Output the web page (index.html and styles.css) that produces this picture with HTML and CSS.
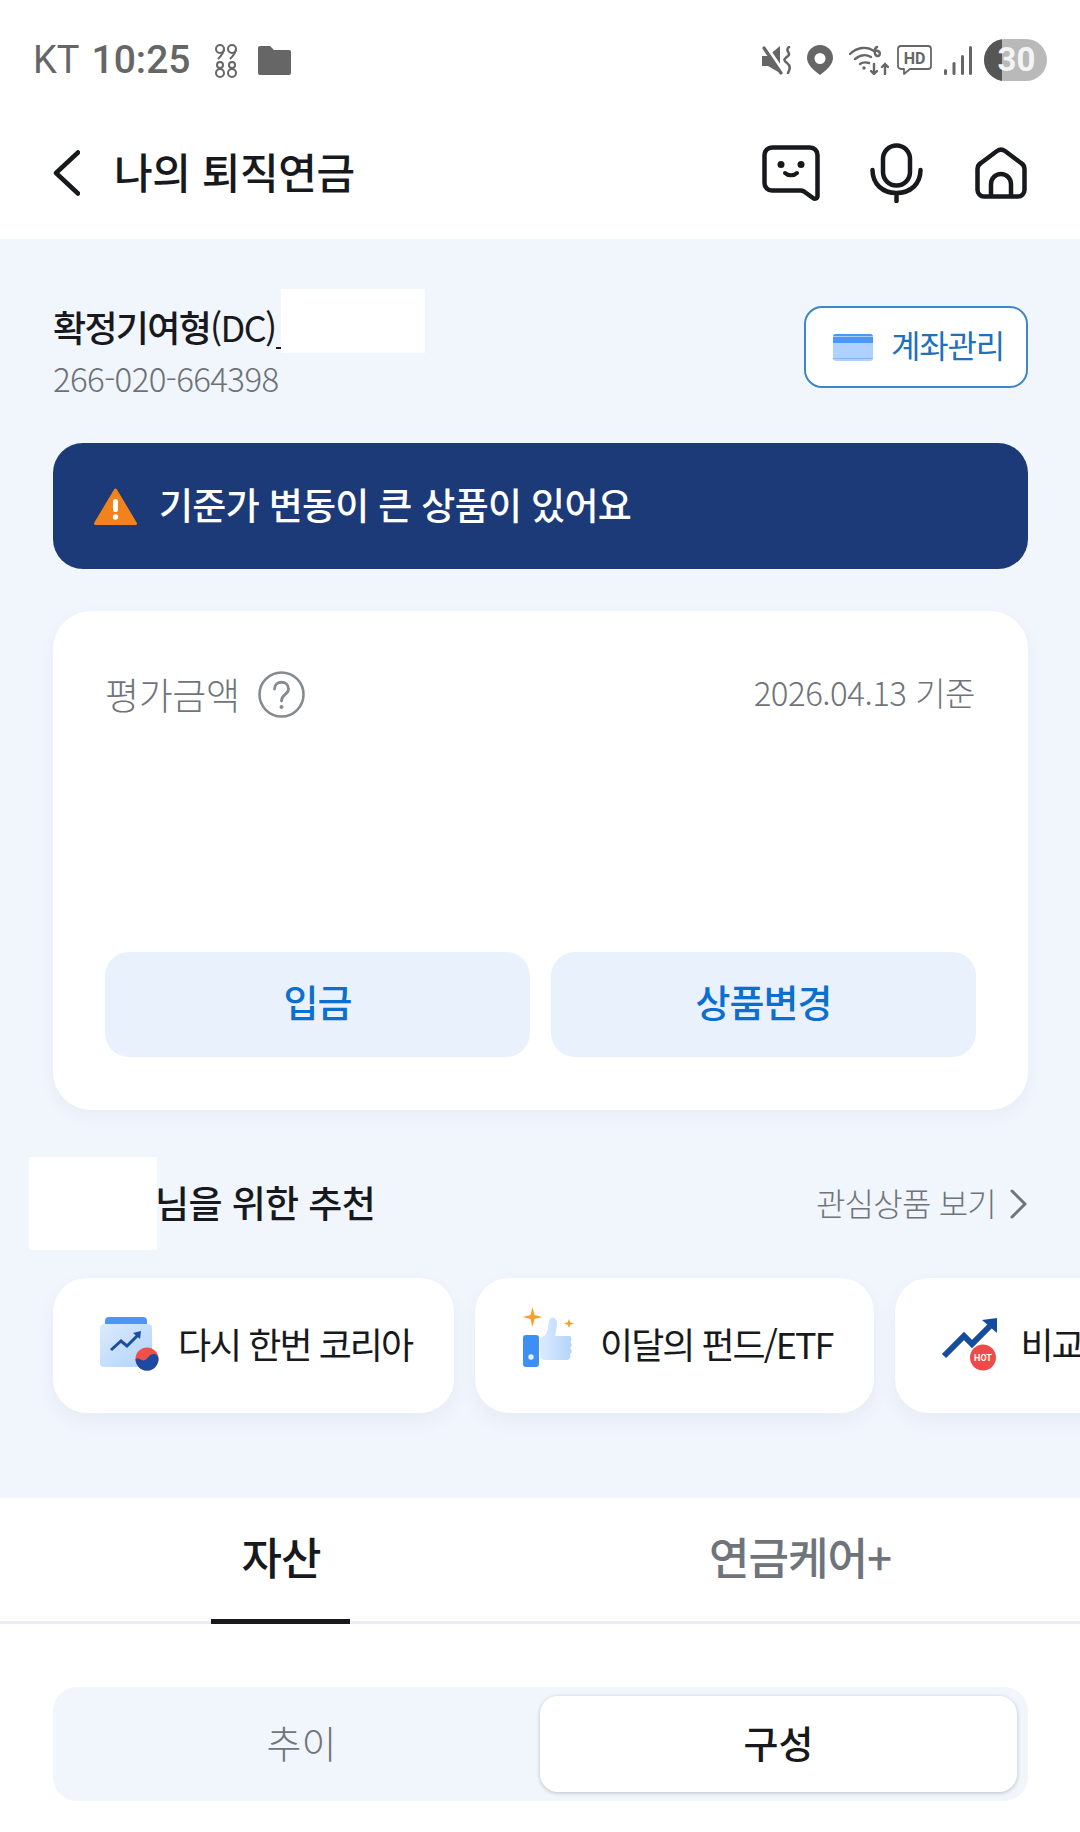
FILE: index.html
```html
<!DOCTYPE html>
<html lang="ko">
<head>
<meta charset="utf-8">
<title>나의 퇴직연금</title>
<link rel="stylesheet" href="styles.css">
</head>
<body>
<div class="page">
  <div class="status">
    <div class="status-left">
      <span class="carrier">KT</span>
      <span class="clock">10:25</span>
      <svg class="ic-nums" viewBox="0 0 24 35" fill="none" stroke="#666" stroke-width="2"><circle cx="6" cy="6" r="4"/><path d="M10 6c0 4-3 7-6 10"/><circle cx="18" cy="6" r="4"/><path d="M22 6c0 4-3 7-6 10"/><circle cx="6" cy="22" r="3"/><circle cx="6" cy="30" r="4"/><circle cx="18" cy="22" r="3"/><circle cx="18" cy="30" r="4"/></svg>
      <svg class="ic-folder" viewBox="0 0 33 29" fill="#666"><path d="M0 2a2 2 0 0 1 2-2h10l4 4h15a2 2 0 0 1 2 2v21a2 2 0 0 1-2 2H2a2 2 0 0 1-2-2z"/></svg>
    </div>
    <div class="status-right">
      <svg class="ic-mute" viewBox="0 0 30 29"><path fill="#666" d="M0 10h6L18 0v27L6 20H0z"/><path stroke="#fff" stroke-width="3.500" d="M4 0l18 27"/><path stroke="#666" stroke-width="3.200" stroke-linecap="round" d="M2 2l17 25"/><path fill="none" stroke="#666" stroke-width="2.600" stroke-linecap="round" d="M27 1c-5 4 3 6-1 9s-5 4-1 7 3 6 1 10"/></svg>
      <svg class="ic-pin" viewBox="0 0 26 30"><path fill="#666" fill-rule="evenodd" d="M13 0a13 13 0 0 1 13 13c0 6-6 12-13 17C6 25 0 19 0 13A13 13 0 0 1 13 0zm0 8a5.500 5.500 0 1 0 0 11 5.500 5.500 0 0 0 0-11z"/></svg>
      <svg class="ic-wifi" viewBox="0 0 40 30" fill="none" stroke="#666" stroke-width="2.400" stroke-linecap="round"><path d="M1 9c7-7 17-8 24-3M6 14c5-4 11-5 16-2M11 19c3-2 6-2 9-1"/><circle cx="15" cy="23" r="1.700" fill="#666" stroke="none"/><path d="M28 2c-3 1-3 8 0 9s4-4 1-5-3 1-3 1M25 19v10M22 26l3 3 3-3M36 29V19M33 22l3-3 3 3"/></svg>
      <svg class="ic-hd" viewBox="0 0 35 30"><path fill="none" stroke="#666" stroke-width="1.800" stroke-linejoin="round" d="M4 1h27a3 3 0 0 1 3 3v17a3 3 0 0 1-3 3H13l-6 5v-5H4a3 3 0 0 1-3-3V4a3 3 0 0 1 3-3z"/><text class="hd-text" x="17.500" y="19" text-anchor="middle">HD</text></svg>
      <svg class="ic-signal" viewBox="0 0 28 29" fill="#666"><rect x="0" y="23" width="3" height="6" rx="1.500"/><rect x="8.500" y="16" width="3" height="13" rx="1.500"/><rect x="17" y="9" width="3" height="20" rx="1.500"/><rect x="25" y="0" width="3" height="29" rx="1.500"/></svg>
      <div class="battery"><span class="battery-level"></span><span class="battery-text">30</span></div>
    </div>
  </div>

  <header class="header">
    <svg class="ic-back" viewBox="0 0 27 46" fill="none" stroke="#17191c" stroke-width="4.500" stroke-linecap="round" stroke-linejoin="round"><path d="M25 2.500L3 23l22 20.500"/></svg>
    <h1 class="title">나의 퇴직연금</h1>
    <div class="header-icons">
      <svg class="ic-chat" viewBox="0 0 58 56" fill="none" stroke="#17191c" stroke-width="4.500" stroke-linejoin="round" stroke-linecap="round"><path d="M10 2.500h38a7.500 7.500 0 0 1 7.500 7.500v41c0 2.500-2.500 3.500-4.500 2l-9-6.500a7 7 0 0 0-4-1H10A7.500 7.500 0 0 1 2.500 38V10A7.500 7.500 0 0 1 10 2.500z"/><circle cx="19" cy="19.500" r="3.500" fill="#17191c" stroke="none"/><circle cx="39" cy="19.500" r="3.500" fill="#17191c" stroke="none"/><path d="M23 28c3 3 9 3 12 0" stroke-width="4"/></svg>
      <svg class="ic-mic" viewBox="0 0 53 60" fill="none" stroke="#17191c" stroke-width="4.500" stroke-linecap="round"><rect x="13" y="2.500" width="27" height="40" rx="13.500"/><path d="M2.500 27c0 14 10 23 24 23s24-9 24-23M26.500 50v8"/></svg>
      <svg class="ic-home" viewBox="0 0 52 52" fill="none" stroke="#17191c" stroke-width="4.500" stroke-linejoin="round"><path d="M22 4a7 7 0 0 1 8 0l16 12a7 7 0 0 1 3.500 6v21a6.500 6.500 0 0 1-6.500 6.500H9A6.500 6.500 0 0 1 2.500 43V22A7 7 0 0 1 6 16z"/><path d="M16 49V37a10 10 0 0 1 20 0v12"/></svg>
    </div>
  </header>

  <main class="main">
    <section class="account">
      <div class="account-info">
        <div class="account-name">확정기여형<span class="latin">(DC)</span><span class="redact redact-name"></span></div>
        <div class="account-num">266-020-664398</div>
      </div>
      <button class="manage">
        <svg class="ic-card" viewBox="0 0 40 27"><rect width="40" height="27" rx="3" fill="#aed2fd"/><path d="M0 3a3 3 0 0 1 3-3h34a3 3 0 0 1 3 3v6H0z" fill="#4a97f5"/><path d="M0 2h40v1H0z" fill="#a9cffb"/><path d="M0 25h40v-1H0z" fill="#7fb5f6"/></svg>
        <span class="manage-text">계좌관리</span>
      </button>
    </section>

    <section class="alert">
      <svg class="ic-warn" viewBox="0 0 43 37"><path fill="#f2831c" stroke="#f2831c" stroke-width="3" stroke-linejoin="round" d="M21.500 2L41.500 35.500H1.500z"/><rect x="19" y="11" width="5" height="13" rx="2.500" fill="#fff"/><circle cx="21.500" cy="29" r="2.700" fill="#fff"/></svg>
      <span class="alert-text">기준가 변동이 큰 상품이 있어요</span>
    </section>

    <section class="card">
      <div class="card-top">
        <div class="eval">
          <span>평가금액</span>
          <svg class="ic-help" viewBox="0 0 47 47" fill="none"><circle cx="23.500" cy="23.500" r="22" stroke="#868b90" stroke-width="2.600"/><path d="M16.500 18c0-9 14-9 14 0 0 6-7 5-7 12" stroke="#868b90" stroke-width="2.800" stroke-linecap="round"/><circle cx="23.500" cy="36" r="2" fill="#868b90"/></svg>
        </div>
        <div class="date">2026.04.13 기준</div>
      </div>
      <div class="card-actions">
        <button class="action">입금</button>
        <button class="action">상품변경</button>
      </div>
    </section>

    <section class="rec-head">
      <div class="rec-title"><span class="redact redact-user"></span>님을 위한 추천</div>
      <div class="rec-link">
        <span class="rec-link-text">관심상품 보기</span>
        <svg class="ic-next" viewBox="0 0 19 30" fill="none" stroke="#6f747a" stroke-width="3" stroke-linecap="round" stroke-linejoin="round"><path d="M3 2l13 13L3 28"/></svg>
      </div>
    </section>

    <section class="pills">
      <div class="pill">
        <svg class="pill-icon" viewBox="0 3 58 60">
          <defs><linearGradient id="g1" x1="0" y1="0" x2="1" y2="1"><stop offset="0" stop-color="#dcebfd"/><stop offset="1" stop-color="#afd2fb"/></linearGradient></defs>
          <path d="M5 14V8a4 4 0 0 1 4-4h34a4 4 0 0 1 4 4v6z" fill="#4a97f5"/>
          <rect x="0" y="11" width="52" height="43" rx="4" fill="url(#g1)"/>
          <path d="M11 37l10-9 6 5 12-12" fill="none" stroke="#1b4f9c" stroke-width="3"/>
          <path d="M33 20l8-2-1 8z" fill="#1b4f9c"/>
          <circle cx="47" cy="46" r="11.500" fill="#f0504a"/>
          <path d="M35.500 46a11.500 11.500 0 0 0 23 0c0-3-2.500-5-5-5s-4.500 2-6 4-4 3-6 2-3-2-6-1z" fill="#1c4aa0"/>
        </svg>
        <span class="pill-text">다시 한번 코리아</span>
      </div>
      <div class="pill">
        <svg class="pill-icon" viewBox="0 9 58 60">
          <defs><linearGradient id="g2" x1="0" y1="0" x2="1" y2="0"><stop offset="0" stop-color="#dcebfd"/><stop offset="1" stop-color="#b2d4fb"/></linearGradient></defs>
          <path d="M10.500 0l2 8 8 2-8 2-2 8-2-8-8-2 8-2z" fill="#f6a033"/>
          <path d="M47 12l1.200 3.300L52 16.500l-3.800 1.200L47 21l-1.200-3.300-3.800-1.200 3.800-1.200z" fill="#f6a033"/>
          <rect x="1" y="28" width="16" height="32" rx="3" fill="#3d8ff5"/>
          <circle cx="9" cy="50" r="2.700" fill="#e8f2ff"/>
          <path d="M18 31c4-1 7-4 8-10 .5-3 0-8 3-10 3-1 6 1 6 5 0 4-1 8-2 13h14c3 0 3 5 1 6 2 1 2 5 0 6 2 1 2 5 0 6 1 2 0 6-3 6H23c-3 0-5-2-5-4z" fill="url(#g2)"/>
        </svg>
        <span class="pill-text">이달의 펀드/ETF</span>
      </div>
      <div class="pill">
        <svg class="pill-icon" viewBox="0 0 58 60">
          <path d="M2 40l20-20 8 8 20-20" fill="none" stroke="#154c9e" stroke-width="6"/>
          <path d="M40 4l15-2v15z" fill="#154c9e"/>
          <circle cx="41" cy="41.500" r="13" fill="#ef4a4a"/>
          <text class="hot" x="41" y="45" text-anchor="middle">HOT</text>
        </svg>
        <span class="pill-text">비교</span>
      </div>
    </section>
  </main>

  <nav class="tabs">
    <div class="tab tab-on"><span>자산</span></div>
    <div class="tab"><span>연금케어+</span></div>
  </nav>

  <section class="panel">
    <div class="segment">
      <div class="seg">추이</div>
      <div class="seg seg-on">구성</div>
    </div>
  </section>
</div>
</body>
</html>
```
FILE: styles.css
```css
* { box-sizing: border-box; }
html, body { margin: 0; padding: 0; background: #fff; }
body { font-family: "Noto Sans CJK KR", "Noto Sans", sans-serif; color: #17191c; }
.page { width: 1080px; height: 1832px; overflow: hidden; display: flex; flex-direction: column; }

/* status bar */
.status { height: 100px; flex: none; display: flex; justify-content: space-between; align-items: center; padding: 20px 33px 0; color: #666; }
.status-left, .status-right { display: flex; align-items: center; }
.carrier, .clock { font-family: "Roboto", sans-serif; font-size: 38px; line-height: 1; }
.clock { font-size: 39px; font-weight: 500; margin-left: 12px; }
.ic-nums { width: 24px; height: 35px; margin-left: 24px; }
.ic-folder { width: 33px; height: 29px; margin-left: 20px; }
.ic-mute { width: 30px; height: 29px; }
.ic-pin { width: 26px; height: 30px; margin-left: 15px; }
.ic-wifi { width: 40px; height: 30px; margin-left: 16px; }
.ic-hd { width: 35px; height: 30px; margin-left: 8px; }
.hd-text { font: 700 16px "Roboto", sans-serif; fill: #666; }
.ic-signal { width: 28px; height: 29px; margin-left: 12px; }
.battery { position: relative; width: 63px; height: 42px; margin-left: 12px; border-radius: 21px; overflow: hidden; background: #b9b9b9; }
.battery-level { display: block; width: 18px; height: 42px; background: #565656; }
.battery-text { position: absolute; inset: 0 0 0 2px; text-align: center; font: 700 33px/42px "Roboto", sans-serif; color: #f4f4f4; }

/* header */
.header { height: 139px; flex: none; display: flex; align-items: center; padding: 6px 53px 0; }
.ic-back { width: 27px; height: 46px; flex: none; }
.title { margin: 0 0 2px 34px; font-size: 42px; line-height: 1.2; font-weight: 500; letter-spacing: -.4px; }
.header-icons { margin-left: auto; display: flex; align-items: center; }
.ic-chat { width: 58px; height: 56px; }
.ic-mic { width: 53px; height: 60px; margin-left: 50px; }
.ic-home { width: 52px; height: 52px; margin-left: 52px; }

/* main */
.main { height: 1259px; flex: none; background: #f1f5fc; padding: 65px 52px 0 53px; }
.account { display: flex; justify-content: space-between; align-items: flex-start; height: 84px; }
.account-name { position: relative; font-size: 36px; line-height: 44px; font-weight: 500; letter-spacing: -1.7px; }
.latin { font-weight: 400; }
.account-num { margin-top: 10px; font-size: 33px; line-height: 40px; font-weight: 300; letter-spacing: -.6px; color: #6c7177; }
.redact { position: absolute; background: #fff; display: block; }
.redact-name { left: 228px; top: -15px; width: 144px; height: 64px; }
.redact-name::before { content: ""; position: absolute; left: -5px; bottom: 4px; width: 5px; height: 2px; background: #17191c; }
.manage { width: 224px; height: 82px; margin-top: 2px; display: flex; align-items: center; justify-content: flex-start; padding: 0 0 0 27px; background: #fff; border: 2px solid #3f86c8; border-radius: 18px; font: 400 32px/1 "Noto Sans CJK KR", sans-serif; letter-spacing: -1.2px; color: #1f71bd; }
.manage-text { margin-bottom: 7px; }
.ic-card { width: 40px; height: 27px; margin-right: 18px; }

.alert { margin-top: 55px; height: 126px; display: flex; align-items: center; padding-left: 41px; background: #1c3a78; border-radius: 30px; color: #fff; font-size: 37px; font-weight: 500; letter-spacing: -.7px; }
.alert-text { margin-bottom: 4px; }
.ic-warn { width: 43px; height: 37px; margin-right: 22px; }

.card { margin-top: 42px; height: 499px; background: #fff; border-radius: 38px; padding: 60px 53px 53px 52px; display: flex; flex-direction: column; justify-content: space-between; box-shadow: 0 6px 16px rgba(60, 80, 130, .05); }
.card-top { display: flex; justify-content: space-between; align-items: center; height: 46px; }
.eval { display: flex; align-items: center; font-size: 37px; letter-spacing: -.4px; color: #6f747a; font-weight: 300; }
.ic-help { width: 47px; height: 47px; margin-left: 18px; }
.date { font-size: 33px; font-weight: 300; color: #6f747a; letter-spacing: -.5px; margin-bottom: 4px; }
.card-actions { display: grid; grid-template-columns: 425px 425px; column-gap: 21px; }
.action { height: 105px; padding: 0 0 7px; border: 0; border-radius: 24px; background: #e8f1fc; color: #0b6fd0; font: 500 38px/1 "Noto Sans CJK KR", sans-serif; letter-spacing: -1px; }

.rec-head { margin-top: 70px; height: 48px; display: flex; justify-content: space-between; align-items: center; }
.rec-title { position: relative; margin-left: 102px; margin-bottom: 4px; font-size: 37px; font-weight: 500; letter-spacing: -.6px; line-height: 48px; }
.redact-user { left: -126px; top: -21px; width: 128px; height: 93px; }
.rec-link { display: flex; align-items: center; font-size: 32px; font-weight: 300; letter-spacing: -.8px; color: #6f747a; }
.rec-link-text { margin-bottom: 4px; }
.ic-next { width: 19px; height: 30px; margin-left: 13px; }

.pills { margin-top: 50px; margin-right: -52px; display: flex; gap: 21px; }
.pill { flex: none; height: 135px; display: flex; align-items: center; gap: 20px; padding: 0 42px 0 47px; background: #fff; border-radius: 34px; font-size: 36px; letter-spacing: -2px; box-shadow: 0 8px 18px rgba(60, 80, 130, .06); }
.pill-text { margin-bottom: 6px; }
.pill-icon { width: 58px; height: 60px; flex: none; overflow: visible; }
.hot { font: 700 9px "Roboto", sans-serif; fill: #fff; letter-spacing: 0; }

/* tabs */
.tabs { height: 126px; flex: none; display: grid; grid-template-columns: 562px 476px; border-bottom: 3px solid #ebedf3; background: #fff; }
.tab { position: relative; display: flex; align-items: center; justify-content: center; padding-bottom: 8px; font-size: 44px; font-weight: 500; letter-spacing: -1px; color: #6f747a; }
.tab-on { color: #17191c; }
.tab-on::after { content: ""; position: absolute; left: 211px; bottom: -3px; width: 139px; height: 5px; background: #17191c; }

/* panel */
.panel { flex: 1; background: #fff; padding: 63px 52px 0 53px; }
.segment { height: 114px; display: grid; grid-template-columns: 477px 477px; padding: 9px 10px; background: #f1f5fc; border-radius: 24px; }
.seg { display: flex; align-items: center; justify-content: center; padding-bottom: 6px; border-radius: 18px; font-size: 38px; font-weight: 300; color: #6f747a; }
.seg-on { background: #fff; color: #17191c; font-weight: 500; box-shadow: 0 1px 4px rgba(0, 0, 0, .22); }
```
